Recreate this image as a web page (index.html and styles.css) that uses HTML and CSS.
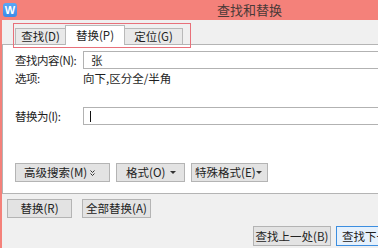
FILE: index.html
```html
<!DOCTYPE html>
<html>
<head>
<meta charset="utf-8">
<link rel="stylesheet" href="styles.css">
</head>
<body>
<div class="win">
  <div class="titlebar">
    <span class="appicon">W</span>
    <span class="title">查找和替换</span>
  </div>
  <div class="frame">
    <div class="tabs">
      <div class="tab t1">查找(D)</div>
      <div class="tab t2 active">替换(P)</div>
      <div class="tab t3">定位(G)</div>
      <div class="mark"></div>
    </div>
    <div class="panel">
      <div class="row r1"><span class="label">查找内容(N):</span><div class="input">张</div></div>
      <div class="row r2"><span class="label">选项:</span><span class="value">向下,区分全/半角</span></div>
      <div class="row r3"><span class="label">替换为(I):</span><div class="input"><span class="caret"></span></div></div>
      <div class="btnrow">
        <button class="btn adv"><span>高级搜索(M)</span><svg class="dbl" width="5" height="6" viewBox="0 0 5 6"><path d="M0.5 0.5 L2.5 2.5 L4.5 0.5 M0.5 3.5 L2.5 5.5 L4.5 3.5" fill="none" stroke="#333" stroke-width="1"/></svg></button>
        <button class="btn fmt"><span>格式(O)</span><span class="tri"></span></button>
        <button class="btn spc"><span>特殊格式(E)</span><span class="tri"></span></button>
      </div>
    </div>
    <div class="actions">
      <button class="btn rep">替换(R)</button>
      <button class="btn all">全部替换(A)</button>
    </div>
    <div class="actions2">
      <button class="btn prev">查找上一处(B)</button>
      <button class="btn next focus">查找下一处(F)</button>
    </div>
  </div>
</div>
</body>
</html>
```

FILE: styles.css
```css
html, body {
  margin: 0;
  padding: 0;
}
body {
  width: 378px;
  height: 248px;
  overflow: hidden;
  background: #f0f0f0;
  font-family: "Noto Sans CJK SC", "Liberation Sans", sans-serif;
  font-size: 11.5px;
  color: #1e1e1e;
}
.win {
  width: 440px;
  height: 248px;
  display: flex;
  flex-direction: column;
}
.titlebar {
  height: 20px;
  background: #f4817a;
  display: flex;
  align-items: center;
  flex-shrink: 0;
}
.appicon {
  width: 14px;
  height: 14px;
  margin-left: 3px;
  border-radius: 3px;
  background: linear-gradient(#5aa7f5, #3b8be8);
  color: #fff;
  font-family: "Liberation Sans", sans-serif;
  font-weight: bold;
  font-size: 11px;
  line-height: 14px;
  text-align: center;
}
.title {
  margin-left: 200px;
  font-size: 13px;
  color: #4a3a38;
  line-height: 20px;
}
.frame {
  flex: 1;
  border-left: 2px solid #f4817a;
  background: #f0f0f0;
  display: flex;
  flex-direction: column;
}
.tabs {
  position: relative;
  display: flex;
  align-items: flex-end;
  padding-left: 13px;
  padding-top: 5px;
  height: 19px;
}
.tab {
  box-sizing: border-box;
  height: 16px;
  line-height: 15px;
  border: 1px solid #b9b9b9;
  border-bottom: none;
  background: #e9e9e9;
  text-align: center;
  white-space: nowrap;
}
.t1 { width: 51px; }
.t2 { width: 60px; margin-left: -1px; }
.t3 { width: 59px; margin-left: -1px; }
.tab.active {
  height: 20px;
  line-height: 18px;
  background: #fff;
  margin-bottom: -1px;
  position: relative;
  z-index: 2;
}
.mark {
  position: absolute;
  left: 11px;
  top: 3px;
  width: 176px;
  height: 23px;
  border: 1px solid #e8707a;
  z-index: 3;
  pointer-events: none;
}
.panel {
  background: #fff;
  border: 1px solid #b4b4b4;
  border-right: none;
  padding: 6px 0 11px 12px;
}
.row {
  display: flex;
  align-items: center;
  height: 18px;
}
.label {
  width: 68px;
  flex-shrink: 0;
  white-space: nowrap;
  letter-spacing: -0.5px;
}
.input {
  flex: 1;
  height: 16px;
  border: 1px solid #b2b2b2;
  border-right: none;
  line-height: 16px;
  padding-left: 7px;
  display: flex;
  align-items: center;
}
.caret {
  width: 1px;
  height: 11px;
  background: #111;
  margin-left: -1px;
}
.r3 {
  margin-top: 20px;
}
.btnrow {
  display: flex;
  gap: 6px;
  margin-top: 38px;
}
.btn {
  font: inherit;
  color: #222;
  background: #e3e3e3;
  border: 1px solid #b4b4b4;
  height: 19px;
  padding: 0;
  margin: 0;
  display: flex;
  align-items: center;
  white-space: nowrap;
  box-sizing: border-box;
  line-height: 17px;
}
.btn .tri, .btn .dbl {
  margin-left: auto;
  flex-shrink: 0;
}
.adv {
  width: 95px;
  padding-left: 8px;
  padding-right: 14px;
}
.fmt {
  width: 69px;
  padding-left: 9px;
  padding-right: 8px;
}
.spc {
  width: 77px;
  padding-left: 3px;
  padding-right: 6px;
}
.tri {
  width: 0;
  height: 0;
  border-left: 3px solid transparent;
  border-right: 3px solid transparent;
  border-top: 3px solid #333;
}
.actions {
  display: flex;
  gap: 10px;
  padding-left: 5px;
  margin-top: 5px;
}
.rep {
  width: 65px;
  justify-content: center;
}
.all {
  width: 69px;
  justify-content: center;
}
.actions2 {
  display: flex;
  gap: 5px;
  padding-left: 251px;
  margin-top: 8px;
}
.prev {
  width: 78px;
  height: 20px;
  justify-content: center;
}
.next {
  width: 90px;
  height: 20px;
  padding-left: 5px;
}
.focus {
  border-color: #3c8ee0;
  background: #e6f1fc;
}
```
